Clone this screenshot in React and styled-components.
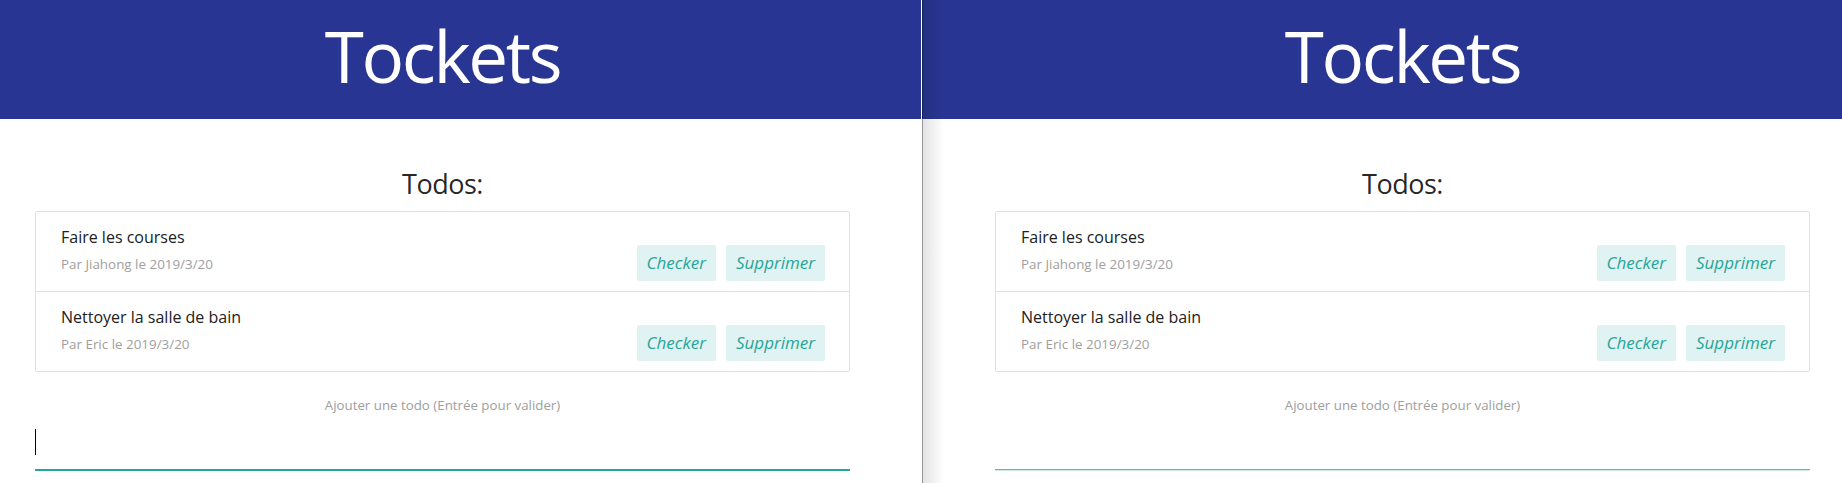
import React from 'react'
import styled, { createGlobalStyle, css } from 'styled-components'

const GlobalStyle = createGlobalStyle`
  * {
    box-sizing: border-box;
  }
  html, body {
    margin: 0;
    padding: 0;
    background: #ffffff;
    overflow: hidden;
  }
  body {
    font-family: "Open Sans", "Noto Sans", sans-serif;
    color: rgba(0, 0, 0, 0.87);
  }
`

const Screen = styled.div`
  display: flex;
  width: 1842px;
  height: 483px;
  overflow: hidden;
  background: #ffffff;
`

const Panel = styled.section`
  position: relative;
  width: ${props => props.width}px;
  flex: none;
  display: flex;
  flex-direction: column;
  ${props => props.shaded && css`
    &::after {
      content: '';
      position: absolute;
      top: 0;
      bottom: 0;
      left: 0;
      width: 22px;
      pointer-events: none;
      background: linear-gradient(
        to right,
        rgba(0, 0, 0, 0.4) 0,
        rgba(0, 0, 0, 0.4) 1px,
        rgba(0, 0, 0, 0.11) 1px,
        rgba(0, 0, 0, 0) 22px
      );
    }
  `}
`

const Divider = styled.div`
  width: 1px;
  flex: none;
  background: #ffffff;
`

const Header = styled.header`
  height: 119px;
  background: #283593;
  display: flex;
  align-items: center;
  padding-left: ${props => props.offset}px;
  padding-bottom: 8px;
`

const Title = styled.h1`
  width: 815px;
  margin: 0;
  text-align: center;
  color: #ffffff;
  font-weight: 400;
  font-size: 71px;
  line-height: 71px;
  letter-spacing: -2.4px;
`

const Column = styled.main`
  width: 815px;
  margin-left: ${props => props.offset}px;
  padding-top: 48px;
  display: flex;
  flex-direction: column;
`

const Heading = styled.h2`
  margin: 0 0 10px;
  text-align: center;
  font-weight: 400;
  font-size: 27px;
  line-height: 34px;
  letter-spacing: -0.5px;
  color: rgba(0, 0, 0, 0.87);
`

const Card = styled.ul`
  list-style: none;
  margin: 0;
  padding: 0;
  border: 1px solid #e0e0e0;
  border-radius: 2px;
`

const Item = styled.li`
  height: 80px;
  display: flex;
  align-items: flex-end;
  justify-content: space-between;
  padding: 14px 24px 10px 25px;
  border-bottom: 1px solid #e0e0e0;
  &:last-child {
    height: 79px;
    border-bottom: none;
  }
`

const Info = styled.div`
  align-self: flex-start;
  display: flex;
  flex-direction: column;
`

const ItemTitle = styled.span`
  font-size: 16px;
  line-height: 22px;
  color: #212121;
`

const Meta = styled.span`
  margin-top: 7px;
  font-size: 13.4px;
  line-height: 18px;
  color: #9e9e9e;
`

const Actions = styled.div`
  display: flex;
  gap: 10px;
`

const FlatButton = styled.button`
  height: 36px;
  padding: 0 10px;
  border: none;
  border-radius: 2px;
  background: #e0f2f1;
  color: #26a69a;
  font-family: "Open Sans", "Noto Sans", sans-serif;
  font-style: italic;
  font-size: 17px;
  line-height: 36px;
  cursor: pointer;
`

const Hint = styled.div`
  margin-top: 24px;
  text-align: center;
  font-size: 13.3px;
  line-height: 18px;
  color: #9e9e9e;
`

const InputLine = styled.div`
  margin-top: 6px;
  height: 50px;
  padding-top: 9px;
  display: flex;
  align-items: flex-start;
  border-bottom: 1px solid ${props => (props.focused ? '#26a69a' : '#9e9e9e')};
  box-shadow: 0 1px 0 0 ${props => (props.focused ? '#26a69a' : '#cdeae7')};
`

const Caret = styled.span`
  width: 1px;
  height: 26px;
  background: #000000;
`

const todos = [
  { id: 1, title: 'Faire les courses', author: 'Jiahong', date: '2019/3/20' },
  { id: 2, title: 'Nettoyer la salle de bain', author: 'Eric', date: '2019/3/20' }
]

const TodoPage = ({ width, offset, shaded, focused }) => (
  <Panel width={width} shaded={shaded}>
    <Header offset={offset}>
      <Title>Tockets</Title>
    </Header>
    <Column offset={offset}>
      <Heading>Todos:</Heading>
      <Card>
        {todos.map(todo => (
          <Item key={todo.id}>
            <Info>
              <ItemTitle>{todo.title}</ItemTitle>
              <Meta>Par {todo.author} le {todo.date}</Meta>
            </Info>
            <Actions>
              <FlatButton>Checker</FlatButton>
              <FlatButton>Supprimer</FlatButton>
            </Actions>
          </Item>
        ))}
      </Card>
      <Hint>Ajouter une todo (Entrée pour valider)</Hint>
      <InputLine focused={focused}>
        {focused && <Caret />}
      </InputLine>
    </Column>
  </Panel>
)

export default function App() {
  return (
    <>
      <GlobalStyle />
      <Screen>
        <TodoPage width={921} offset={35} focused />
        <Divider />
        <TodoPage width={920} offset={73} shaded />
      </Screen>
    </>
  )
}
